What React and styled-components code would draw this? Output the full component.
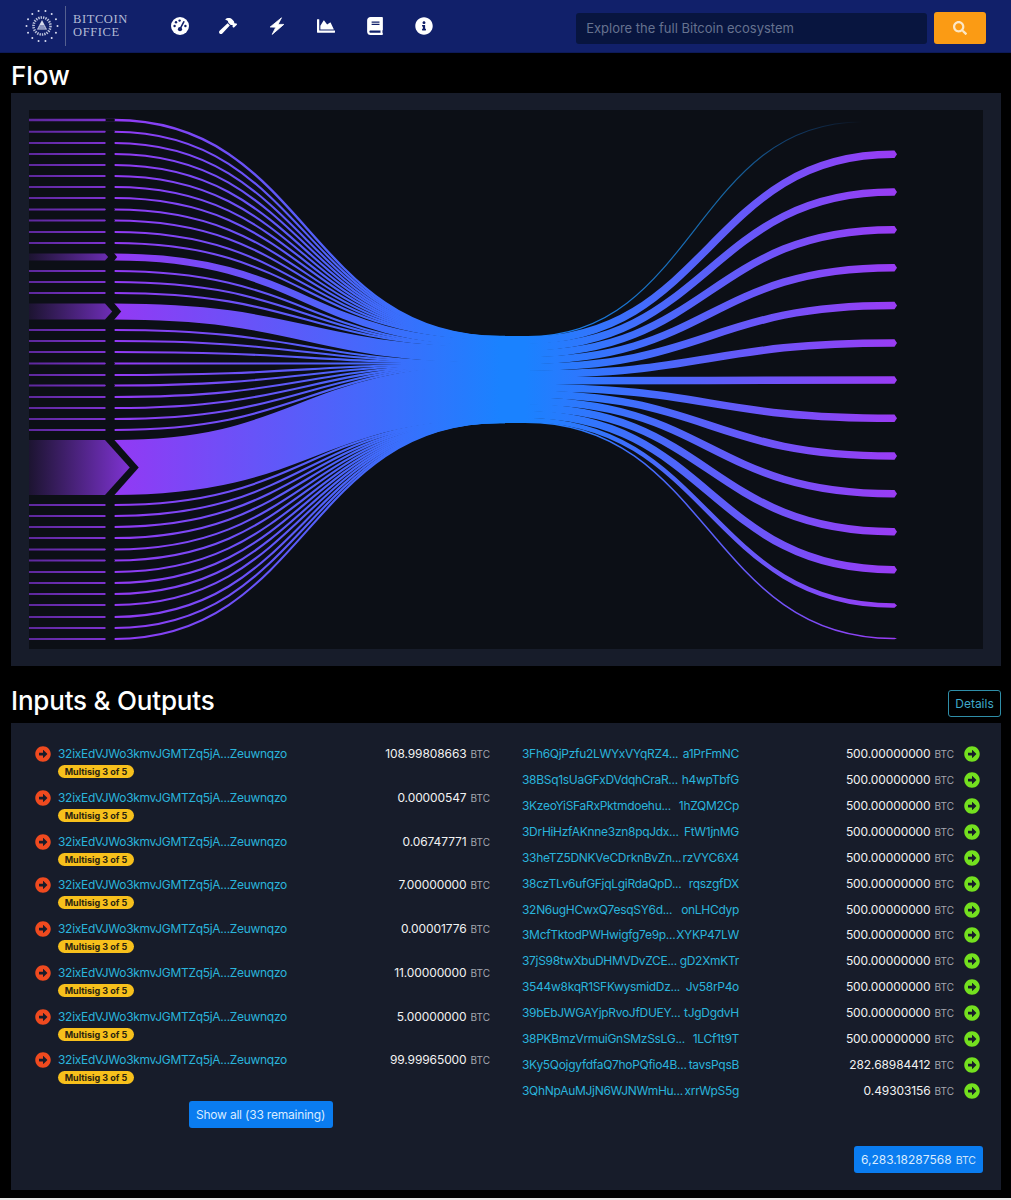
import React from 'react';
import styled, { createGlobalStyle } from 'styled-components';
import {
  FaHammer, FaChartArea, FaBook, FaInfoCircle,
  FaArrowAltCircleRight, FaSearch,
} from 'react-icons/fa';

const Global = createGlobalStyle`
  html { background: #e9e9e9; }
  body { margin: 0; font-family: Inter, "Liberation Sans", sans-serif; color: #fff; }
  * { box-sizing: border-box; }
`;

const Page = styled.div`
  background: #000;
  padding-bottom: 8px;
`;
const Nav = styled.header`
  height: 53px;
  background: #11206a;
  border-bottom: 1px solid #0d1a58;
  display: flex;
  align-items: center;
  padding: 0 25px 1px 25px;
`;
const Brand = styled.div`
  display: flex;
  align-items: center;
  width: 130.5px;
`;
const Divider = styled.span`
  width: 1px;
  height: 40px;
  background: #55608f;
  margin: 0 7px 0 6px;
`;
const BrandText = styled.div`
  font-family: "Liberation Serif", serif;
  font-size: 12.5px;
  line-height: 12.5px;
  color: #b4bcd6;
  letter-spacing: 0.6px;
  white-space: nowrap;
`;
const NavIcons = styled.nav`
  display: flex;
  width: 421.5px;
  color: #fff;
  font-size: 18px;
`;
const NavIcon = styled.span`
  width: 48.8px;
  display: flex;
  justify-content: center;
  align-items: center;
`;
const SearchInput = styled.div`
  width: 351px;
  height: 31px;
  margin-top: 5px;
  background: #08153f;
  border-radius: 3px;
  color: #66728f;
  font-size: 13px;
  display: flex;
  align-items: center;
  padding-left: 10px;
`;
const SearchButton = styled.button`
  width: 52px;
  height: 32px;
  margin: 4px 0 0 7.5px;
  border: 0;
  border-radius: 3px;
  background: #fb9b14;
  color: #fbe7c6;
  font-size: 14px;
  display: flex;
  align-items: center;
  justify-content: center;
`;
const Main = styled.main`
  padding: 0 10px 0 11px;
`;
const FlowTitle = styled.h2`
  margin: 0;
  height: 40px;
  padding-top: 5px;
  font-size: 26px;
  line-height: 36px;
  font-weight: 500;
`;
const ChartPanel = styled.section`
  background: #171c2a;
  padding: 17px 18px;
  height: 573px;
`;
const ChartSvg = styled.svg`
  display: block;
  width: 954px;
  height: 539px;
  background: #0c0f16;
`;
const SectionHead = styled.div`
  height: 57px;
  display: flex;
  justify-content: space-between;
  align-items: flex-end;
  padding-bottom: 6px;
`;
const SectionTitle = styled.h2`
  margin: 0 0 -2px;
  font-size: 26px;
  letter-spacing: -0.2px;
  line-height: 36px;
  font-weight: 500;
`;
const DetailsButton = styled.button`
  width: 53px;
  height: 27px;
  padding: 0;
  background: transparent;
  border: 1px solid #2f8ea8;
  border-radius: 3px;
  color: #3fa9c9;
  font: 400 12px Inter, sans-serif;
`;
const TablePanel = styled.section`
  background: #171c2a;
  padding: 18px 18px 17px;
`;
const Columns = styled.div`
  display: grid;
  grid-template-columns: 461px 461px;
  column-gap: 32px;
  align-items: start;
`;
const InputRow = styled.div`
  height: 43.75px;
  display: grid;
  grid-template-columns: 23px 1fr auto;
  padding: 5px 0 0 6px;
  align-items: start;
`;
const OutputRow = styled.div`
  height: 25.93px;
  display: grid;
  grid-template-columns: 217px 1fr 29px;
  align-items: start;
  padding-top: 5px;
`;
const Arrow = styled.span`
  display: flex;
  color: ${p => p.$color};
  font-size: 16px;
  height: 16px;
  background: radial-gradient(circle, #171c2a 0 4.5px, transparent 5px);
  border-radius: 50%;
  width: 16px;
`;
const OutArrow = styled(Arrow)`
  margin-left: 10px;
`;
const Address = styled.a`
  display: block;
  color: #2ab4dc;
  font-size: 12px;
  letter-spacing: -0.3px;
  line-height: 16px;
  white-space: nowrap;
`;
const SplitAddress = styled(Address)`
  display: flex;
  justify-content: space-between;
  min-width: 0;
`;
const Badge = styled.span`
  display: block;
  width: 76px;
  height: 13px;
  margin-top: 3px;
  border-radius: 7px;
  background: #f7c01c;
  color: #2b2410;
  font-size: 9px;
  font-weight: 700;
  line-height: 13px;
  text-align: center;
`;
const Amount = styled.div`
  text-align: right;
  font-size: 12px;
  letter-spacing: -0.1px;
  line-height: 16px;
  white-space: nowrap;
  color: #f2f2f2;
`;
const Unit = styled.span`
  font-size: 10px;
  letter-spacing: 0;
  color: #a5a8b0;
  margin-left: 4px;
`;
const ShowAll = styled.div`
  display: flex;
  justify-content: center;
  margin-top: 10px;
`;
const BlueButton = styled.button`
  height: 27px;
  border: 0;
  border-radius: 3px;
  background: #0a7cf0;
  color: #d9ebff;
  font: 400 12px Inter, sans-serif;
  padding: 0;
  white-space: nowrap;
`;
const ShowButton = styled(BlueButton)`
  width: 144px;
  letter-spacing: -0.2px;
  margin-left: 2px;
`;
const TotalButton = styled(BlueButton)`
  width: 129px;
`;
const TotalUnit = styled.span`
  font-size: 10.5px;
  margin-left: 4px;
  color: #cfe4fb;
`;
const Footer = styled.div`
  display: flex;
  justify-content: flex-end;
  margin-top: 18px;
`;

const inputs = [
  [120, 2.4], [131.7], [143], [154], [165], [176], [187], [198], [209.5], [220.5], [232], [243],
  [257, 7], [271], [282], [293], [311.5, 16], [330], [341], [352], [363.5], [375], [385.5], [397],
  [408], [419], [430], [467.5, 55], [505], [516], [527], [538], [549.5], [560.5], [572], [583],
  [594], [605], [617], [628], [639],
].map(([y, w]) => ({ y, w: w || 2.1, big: !!w && w > 3 }));

const outputs = [
  [154.3, 7.5], [192, 7.5], [229.7, 7.5], [267.7, 7.5], [305.5, 7.5], [343, 7.5], [380, 7.5],
  [418.3, 7.5], [456, 7.5], [493.7, 7.5], [531.7, 7.5], [569.7, 7.5], [605.5, 4.5], [638.5, 1.5],
];

function Flow() {
  let cursor = 336.8;
  const inRibbons = inputs.map(({ y, w, big }) => {
    const span = big ? w : 0.2;
    const yc = cursor + span / 2;
    cursor += span;
    return { y, w, yc, big };
  });
  let outCursor = 336.9;
  const outRibbons = outputs.map(([y, w], i) => {
    const span = w > 7 ? 6.75 : w > 4 ? 4 : 0.5;
    const yc = outCursor + span / 2;
    outCursor += span;
    return { y, w, yc, i };
  });
  return (
    <ChartSvg viewBox="29 110 954 539">
      <defs>
        <linearGradient id="inGrad" gradientUnits="userSpaceOnUse" x1="114" x2="500" y1="0" y2="0">
          <stop offset="0" stopColor="#9339f4" />
          <stop offset="1" stopColor="#1a82ff" />
        </linearGradient>
        <linearGradient id="outGrad" gradientUnits="userSpaceOnUse" x1="525" x2="897" y1="0" y2="0">
          <stop offset="0" stopColor="#1a82ff" />
          <stop offset="1" stopColor="#9a3cf4" />
        </linearGradient>
        <linearGradient id="feeGrad" gradientUnits="userSpaceOnUse" x1="528" x2="862" y1="0" y2="0">
          <stop offset="0" stopColor="#1a82ff" />
          <stop offset="0.6" stopColor="#1a82d0" stopOpacity="0.75" />
          <stop offset="1" stopColor="#1a82ff" stopOpacity="0" />
        </linearGradient>
        <linearGradient id="leftThin" gradientUnits="userSpaceOnUse" x1="29" x2="110" y1="0" y2="0">
          <stop offset="0" stopColor="#9339f4" stopOpacity="0.6" />
          <stop offset="1" stopColor="#9339f4" stopOpacity="0.85" />
        </linearGradient>
        <linearGradient id="leftBig" gradientUnits="userSpaceOnUse" x1="29" x2="130" y1="0" y2="0">
          <stop offset="0" stopColor="#9339f4" stopOpacity="0.12" />
          <stop offset="1" stopColor="#9339f4" stopOpacity="0.85" />
        </linearGradient>
      </defs>
      <rect x="495" y="336" width="35" height="87" fill="#1a82ff" />
      {inRibbons.map(({ y, w, yc }, i) => (
        <path
          key={`i${i}`}
          d={`M105 ${y} L114 ${y} C307 ${y} 307 ${yc} 500 ${yc} L505 ${yc}`}
          fill="none"
          stroke="url(#inGrad)"
          strokeWidth={w}
        />
      ))}
      <path
        d="M528 336.6 C695 336.6 695 122 862 122"
        fill="none"
        stroke="url(#feeGrad)"
        strokeWidth="1.2"
      />
      {outRibbons.map(({ y, w, yc, i }) => (
        <g key={`o${i}`}>
          <path
            d={`M520 ${yc} L525 ${yc} C709 ${yc} 709 ${y} 893 ${y}`}
            fill="none"
            stroke="url(#outGrad)"
            strokeWidth={w}
          />
          <path d={`M893 ${y - w / 2} L894.5 ${y - w / 2} L897 ${y} L894.5 ${y + w / 2} L893 ${y + w / 2} Z`} fill="#9a3cf4" />
        </g>
      ))}
      {inRibbons.map(({ y, w, big }, i) => {
        const top = y - w / 2;
        const bot = y + w / 2;
        const tip = 0.9 * (w / 2);
        return (
          <g key={`l${i}`}>
            <path
              d={`M105 ${top - 0.4} L114 ${top - 0.4} L${114 + tip} ${y} L114 ${bot + 0.4} L105 ${bot + 0.4} Z`}
              fill="#0c0f16"
            />
            <path
              d={`M29 ${top} L105 ${top} L${105 + tip} ${y} L105 ${bot} L29 ${bot} Z`}
              fill={big ? 'url(#leftBig)' : 'url(#leftThin)'}
            />
          </g>
        );
      })}
    </ChartSvg>
  );
}

function Logo() {
  const stars = Array.from({ length: 14 }, (_, i) => {
    const a = (i / 14) * Math.PI * 2;
    return [17 + 15.5 * Math.cos(a), 17 + 15.5 * Math.sin(a)];
  });
  return (
    <svg width="34" height="34" viewBox="0 0 34 34">
      {stars.map(([x, y], i) => <circle key={i} cx={x} cy={y} r="1" fill="#d8dcf0" />)}
      <circle cx="17" cy="17" r="8.5" fill="none" stroke="#b9c0da" strokeWidth="2.6" strokeDasharray="1.4 1" />
      <path d="M17 11 L22 20.5 L12 20.5 Z" fill="#d5d9ea" />
      <path d="M14.5 17 h5 M13.5 19 h7" stroke="#3a4a90" strokeWidth="1" />
    </svg>
  );
}

function GaugeIcon() {
  return (
    <svg width="18" height="18" viewBox="0 0 18 18">
      <circle cx="9" cy="9" r="9" fill="#fff" />
      <g fill="#11206a">
        <circle cx="3.6" cy="9" r="1.2" />
        <circle cx="5" cy="5.2" r="1.2" />
        <circle cx="8.6" cy="3.6" r="1.2" />
        <circle cx="14.4" cy="9" r="1.2" />
        <circle cx="9" cy="12.2" r="2.1" />
      </g>
      <path d="M9 12 L12.8 4.8" stroke="#11206a" strokeWidth="1.6" strokeLinecap="round" />
    </svg>
  );
}

function BoltIcon() {
  return (
    <svg width="16" height="18" viewBox="0 0 16 18">
      <path d="M12.5 0.8 L1.2 10 L6.8 10.2 L3.2 17.4 L14.8 7.4 L9 7.4 Z" fill="#fff" stroke="#fff" strokeWidth="0.8" strokeLinejoin="round" />
    </svg>
  );
}

const inAmounts = ['108.99808663', '0.00000547', '0.06747771', '7.00000000', '0.00001776', '11.00000000', '5.00000000', '99.99965000'];
const outRows = [
  ['3Fh6QjPzfu2LWYxVYqRZ4...', 'a1PrFmNC', '500.00000000'],
  ['38BSq1sUaGFxDVdqhCraR...', 'h4wpTbfG', '500.00000000'],
  ['3KzeoYiSFaRxPktmdoehu...', '1hZQM2Cp', '500.00000000'],
  ['3DrHiHzfAKnne3zn8pqJdx...', 'FtW1jnMG', '500.00000000'],
  ['33heTZ5DNKVeCDrknBvZn...', 'rzVYC6X4', '500.00000000'],
  ['38czTLv6ufGFjqLgiRdaQpD...', 'rqszgfDX', '500.00000000'],
  ['32N6ugHCwxQ7esqSY6d...', 'onLHCdyp', '500.00000000'],
  ['3McfTktodPWHwigfg7e9p...', 'XYKP47LW', '500.00000000'],
  ['37jS98twXbuDHMVDvZCE...', 'gD2XmKTr', '500.00000000'],
  ['3544w8kqR1SFKwysmidDz...', 'Jv58rP4o', '500.00000000'],
  ['39bEbJWGAYjpRvoJfDUEY...', 'tJgDgdvH', '500.00000000'],
  ['38PKBmzVrmuiGnSMzSsLG...', '1LCf1t9T', '500.00000000'],
  ['3Ky5QojgyfdfaQ7hoPQfio4B...', 'tavsPqsB', '282.68984412'],
  ['3QhNpAuMJjN6WJNWmHu...', 'xrrWpS5g', '0.49303156'],
];

export default function App() {
  return (
    <Page>
      <Global />
      <Nav>
        <Brand>
          <Logo />
          <Divider />
          <BrandText>BITCOIN<br />OFFICE</BrandText>
        </Brand>
        <NavIcons>
          <NavIcon><GaugeIcon /></NavIcon>
          <NavIcon><FaHammer /></NavIcon>
          <NavIcon><BoltIcon /></NavIcon>
          <NavIcon><FaChartArea /></NavIcon>
          <NavIcon><FaBook /></NavIcon>
          <NavIcon><FaInfoCircle /></NavIcon>
        </NavIcons>
        <SearchInput>Explore the full Bitcoin ecosystem</SearchInput>
        <SearchButton><FaSearch /></SearchButton>
      </Nav>
      <Main>
        <FlowTitle>Flow</FlowTitle>
        <ChartPanel><Flow /></ChartPanel>
        <SectionHead>
          <SectionTitle>Inputs &amp; Outputs</SectionTitle>
          <DetailsButton>Details</DetailsButton>
        </SectionHead>
        <TablePanel>
          <Columns>
            <div>
              {inAmounts.map((amt, i) => (
                <InputRow key={i}>
                  <Arrow $color="#ef4a1f"><FaArrowAltCircleRight /></Arrow>
                  <div>
                    <Address>32ixEdVJWo3kmvJGMTZq5jA...Zeuwnqzo</Address>
                    <Badge>Multisig 3 of 5</Badge>
                  </div>
                  <Amount>{amt}<Unit>BTC</Unit></Amount>
                </InputRow>
              ))}
              <ShowAll><ShowButton>Show all (33 remaining)</ShowButton></ShowAll>
            </div>
            <div>
              {outRows.map(([a, b, amt], i) => (
                <OutputRow key={i}>
                  <SplitAddress><span>{a}</span><span>{b}</span></SplitAddress>
                  <Amount>{amt}<Unit>BTC</Unit></Amount>
                  <OutArrow $color="#74e01f"><FaArrowAltCircleRight /></OutArrow>
                </OutputRow>
              ))}
            </div>
          </Columns>
          <Footer>
            <TotalButton>6,283.18287568<TotalUnit>BTC</TotalUnit></TotalButton>
          </Footer>
        </TablePanel>
      </Main>
    </Page>
  );
}
